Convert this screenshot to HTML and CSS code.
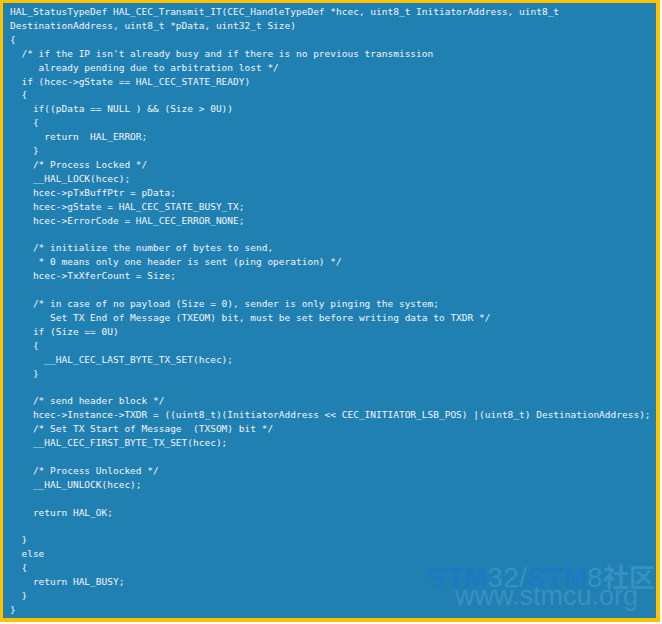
FILE: index.html
```html
<!DOCTYPE html>
<html>
<head>
<meta charset="utf-8">
<link rel="stylesheet" href="styles.css">
</head>
<body>
<div class="frame">
<pre class="code">HAL_StatusTypeDef HAL_CEC_Transmit_IT(CEC_HandleTypeDef *hcec, uint8_t InitiatorAddress, uint8_t
DestinationAddress, uint8_t *pData, uint32_t Size)
{
  /* if the IP isn't already busy and if there is no previous transmission
     already pending due to arbitration lost */
  if (hcec-&gt;gState == HAL_CEC_STATE_READY)
  {
    if((pData == NULL ) &amp;&amp; (Size &gt; 0U))
    {
      return  HAL_ERROR;
    }
    /* Process Locked */
    __HAL_LOCK(hcec);
    hcec-&gt;pTxBuffPtr = pData;
    hcec-&gt;gState = HAL_CEC_STATE_BUSY_TX;
    hcec-&gt;ErrorCode = HAL_CEC_ERROR_NONE;

    /* initialize the number of bytes to send,
     * 0 means only one header is sent (ping operation) */
    hcec-&gt;TxXferCount = Size;

    /* in case of no payload (Size = 0), sender is only pinging the system;
       Set TX End of Message (TXEOM) bit, must be set before writing data to TXDR */
    if (Size == 0U)
    {
      __HAL_CEC_LAST_BYTE_TX_SET(hcec);
    }

    /* send header block */
    hcec-&gt;Instance-&gt;TXDR = ((uint8_t)(InitiatorAddress &lt;&lt; CEC_INITIATOR_LSB_POS) |(uint8_t) DestinationAddress);
    /* Set TX Start of Message  (TXSOM) bit */
    __HAL_CEC_FIRST_BYTE_TX_SET(hcec);

    /* Process Unlocked */
    __HAL_UNLOCK(hcec);

    return HAL_OK;

  }
  else
  {
    return HAL_BUSY;
  }
}</pre>
<div class="watermark">
  <div class="wm-title"><b>STM</b>32/<b>STM</b>8<span class="cjk">社区</span></div>
  <div class="wm-url">www.stmcu.org</div>
</div>
</div>
</body>
</html>
```

FILE: styles.css
```css
html, body {
  margin: 0;
  padding: 0;
  background: #ffffff;
}

.frame {
  position: relative;
  box-sizing: border-box;
  width: 660px;
  height: 622px;
  border-style: solid;
  border-color: #ffc000;
  border-width: 3px 4px 4px 3px;
  background: #2080b1;
  padding: 2px 0 0 7px;
  overflow: hidden;
}

.code {
  margin: 0;
  font-family: "DejaVu Sans Mono", "Liberation Mono", monospace;
  font-size: 9.5px;
  line-height: 13.9px;
  color: #f2f6fa;
  white-space: pre;
}

.watermark {
  position: absolute;
  right: 1px;
  bottom: 13px;
  display: flex;
  flex-direction: column;
  align-items: flex-end;
  font-family: "Liberation Sans", Arial, "Noto Sans CJK SC", sans-serif;
  pointer-events: none;
}

.wm-title {
  font-size: 28px;
  line-height: 20px;
  color: #3790c4;
  letter-spacing: 0.3px;
  white-space: nowrap;
}

.wm-title b {
  color: #1b7bc2;
  font-weight: 700;
}

.wm-title .cjk {
  font-family: "Noto Sans CJK SC", sans-serif;
  font-weight: 700;
  color: #3790c4;
  font-size: 26px;
  letter-spacing: 0;
}

.wm-url {
  font-size: 27px;
  line-height: 17px;
  color: #3a8fc3;
  margin-right: 17px;
  letter-spacing: 0;
  white-space: nowrap;
}
```
